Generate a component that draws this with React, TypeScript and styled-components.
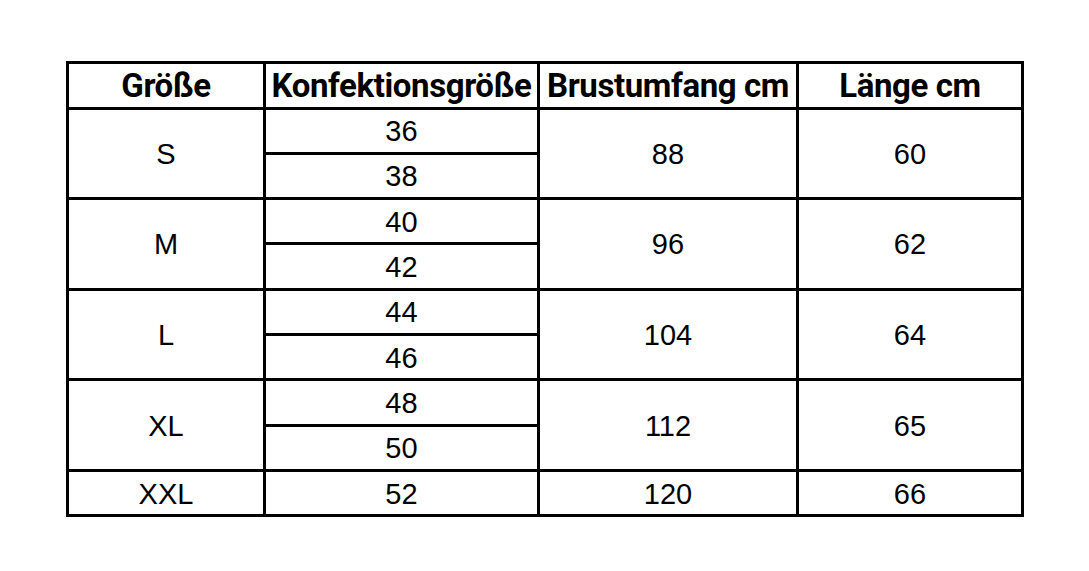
import React from "react";
import styled, { createGlobalStyle } from "styled-components";

const Global = createGlobalStyle`
  html, body { margin: 0; padding: 0; background: #fff; }
  body { width: 1089px; height: 571px; overflow: hidden; }
`;

const Page = styled.div`
  padding: 61px 0 0 66px;
`;

const Table = styled.table`
  border-collapse: collapse;
  table-layout: fixed;
  width: 955px;
  border: 3px solid #000;
`;

const HeadCell = styled.th<{ $w: number }>`
  width: ${(p) => p.$w}px;
  height: 42.5px;
  padding: 0;
  border: 3px solid #000;
  font-family: Roboto, "Liberation Sans", sans-serif;
  font-weight: 700;
  font-size: 33px;
  letter-spacing: -0.4px;
  line-height: 1;
  color: #000;
  text-align: center;
  vertical-align: middle;
  white-space: nowrap;
  overflow: hidden;
`;

const Cell = styled.td`
  height: 40.3px;
  padding: 2px 0 0;
  border: 3px solid #000;
  font-family: "Liberation Sans", Arial, sans-serif;
  font-size: 29px;
  color: #000;
  text-align: center;
  vertical-align: middle;
  line-height: 1;
`;

type Group = { size: string; konf: string[]; brust: string; laenge: string };

const groups: Group[] = [
  { size: "S", konf: ["36", "38"], brust: "88", laenge: "60" },
  { size: "M", konf: ["40", "42"], brust: "96", laenge: "62" },
  { size: "L", konf: ["44", "46"], brust: "104", laenge: "64" },
  { size: "XL", konf: ["48", "50"], brust: "112", laenge: "65" },
  { size: "XXL", konf: ["52"], brust: "120", laenge: "66" },
];

export default function App() {
  return (
    <>
      <Global />
      <Page>
        <Table>
          <thead>
            <tr>
              <HeadCell $w={194}>Größe</HeadCell>
              <HeadCell $w={271}>Konfektionsgröße</HeadCell>
              <HeadCell $w={256}>Brustumfang cm</HeadCell>
              <HeadCell $w={222}>Länge cm</HeadCell>
            </tr>
          </thead>
          <tbody>
            {groups.map((g) =>
              g.konf.map((k, i) => (
                <tr key={g.size + k}>
                  {i === 0 && <Cell rowSpan={g.konf.length}>{g.size}</Cell>}
                  <Cell>{k}</Cell>
                  {i === 0 && <Cell rowSpan={g.konf.length}>{g.brust}</Cell>}
                  {i === 0 && <Cell rowSpan={g.konf.length}>{g.laenge}</Cell>}
                </tr>
              ))
            )}
          </tbody>
        </Table>
      </Page>
    </>
  );
}
